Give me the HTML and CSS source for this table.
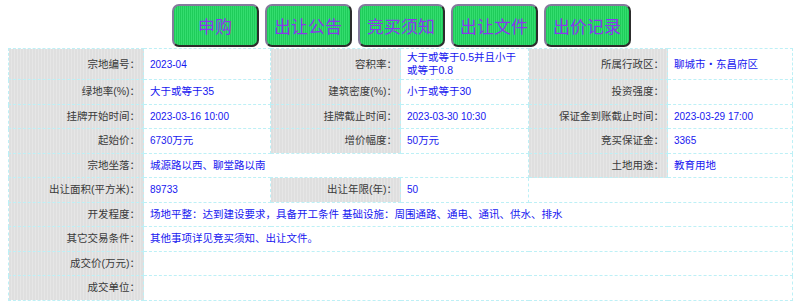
FILE: index.html
```html
<!DOCTYPE html>
<html lang="zh-CN">
<head>
<meta charset="utf-8">
<title>宗地信息</title>
<link rel="stylesheet" href="styles.css">
</head>
<body>
<div class="page">
  <div class="actions">
    <a class="btn">申购</a>
    <a class="btn">出让公告</a>
    <a class="btn">竞买须知</a>
    <a class="btn">出让文件</a>
    <a class="btn">出价记录</a>
  </div>
  <table class="info">
    <colgroup>
      <col class="c-l1"><col class="c-v1"><col class="c-l2"><col class="c-v2"><col class="c-l3"><col class="c-v3">
    </colgroup>
    <tr class="first">
      <td class="lbl">宗地编号：</td><td class="val num">2023-04</td>
      <td class="lbl">容积率：</td><td class="val">大于或等于0.5并且小于<br>或等于0.8</td>
      <td class="lbl">所属行政区：</td><td class="val">聊城市・东昌府区</td>
    </tr>
    <tr>
      <td class="lbl">绿地率(%)：</td><td class="val">大于或等于35</td>
      <td class="lbl">建筑密度(%)：</td><td class="val">小于或等于30</td>
      <td class="lbl">投资强度：</td><td class="val"></td>
    </tr>
    <tr>
      <td class="lbl">挂牌开始时间：</td><td class="val num">2023-03-16 10:00</td>
      <td class="lbl">挂牌截止时间：</td><td class="val num">2023-03-30 10:30</td>
      <td class="lbl">保证金到账截止时间：</td><td class="val num">2023-03-29 17:00</td>
    </tr>
    <tr>
      <td class="lbl">起始价：</td><td class="val"><span class="num">6730</span>万元</td>
      <td class="lbl">增价幅度：</td><td class="val"><span class="num">50</span>万元</td>
      <td class="lbl">竞买保证金：</td><td class="val num">3365</td>
    </tr>
    <tr>
      <td class="lbl">宗地坐落：</td><td class="val" colspan="3">城源路以西、聊堂路以南</td>
      <td class="lbl">土地用途：</td><td class="val">教育用地</td>
    </tr>
    <tr>
      <td class="lbl">出让面积(平方米)：</td><td class="val num">89733</td>
      <td class="lbl">出让年限(年)：</td><td class="val num">50</td>
      <td class="val" colspan="2"></td>
    </tr>
    <tr>
      <td class="lbl">开发程度：</td><td class="val" colspan="5">场地平整：达到建设要求，具备开工条件 基础设施：周围通路、通电、通讯、供水、排水</td>
    </tr>
    <tr>
      <td class="lbl">其它交易条件：</td><td class="val" colspan="5">其他事项详见竞买须知、出让文件。</td>
    </tr>
    <tr>
      <td class="lbl">成交价(万元)：</td><td class="val" colspan="5"></td>
    </tr>
    <tr>
      <td class="lbl">成交单位：</td><td class="val" colspan="5"></td>
    </tr>
  </table>
</div>
</body>
</html>
```
FILE: styles.css
```css
html, body {
  margin: 0;
  padding: 0;
  background: #ffffff;
}
.page {
  padding: 4px 8px 0 8px;
  font-family: "Liberation Sans", "Noto Sans CJK SC", sans-serif;
}
.actions {
  display: flex;
  justify-content: center;
  gap: 6px;
  height: 44px;
  padding-left: 2px;
}
.btn {
  box-sizing: border-box;
  width: 87px;
  height: 43px;
  display: flex;
  align-items: center;
  justify-content: center;
  border: 2px solid;
  border-color: #857a9c #2c2c2c #2c2c2c #857a9c;
  border-radius: 7px;
  background: repeating-linear-gradient(90deg, #1fcc5a 0 1px, #33dd6e 1px 2px);
  color: #8a35ee;
  font-family: "Noto Sans CJK SC", sans-serif;
  font-size: 17px;
  line-height: 1;
  cursor: pointer;
}
.info {
  width: 784px;
  table-layout: fixed;
  border-collapse: collapse;
  font-size: 10.5px;
  line-height: 13px;
}
.c-l1 { width: 135px; }
.c-v1 { width: 127px; }
.c-l2 { width: 130px; }
.c-v2 { width: 128px; }
.c-l3 { width: 139px; }
.c-v3 { width: 125px; }
.info td {
  border: 1px dashed #bdf0f6;
  height: 19.5px;
  padding: 2px 4px 2px 6px;
  vertical-align: middle;
}
.info tr.first td {
  height: 26px;
}
.info td.lbl {
  text-align: right;
  color: #3a3a3a;
  padding-right: 3px;
  padding-left: 2px;
  background: repeating-linear-gradient(90deg, #d8d8d8 0 1px, #e6e6e6 1px 3px);
  white-space: nowrap;
}
.info td.val {
  color: #1717f0;
  background: #ffffff;
}
.num {
  font-size: 10px;
  color: #2020ee;
}
```
